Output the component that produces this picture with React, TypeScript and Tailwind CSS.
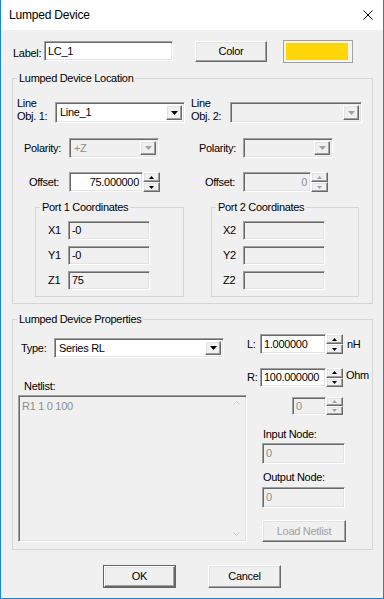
import React from 'react';

const font = "font-['Liberation_Sans',Arial,sans-serif]";

const sunken =
  'border border-t-[#a0a0a0] border-l-[#a0a0a0] border-r-white border-b-white shadow-[inset_1px_1px_0_#696969,inset_-1px_-1px_0_#e3e3e3]';
const raised =
  'border border-t-white border-l-white border-r-[#696969] border-b-[#696969] shadow-[inset_-1px_-1px_0_#a0a0a0,inset_1px_1px_0_#e3e3e3]';

const Arrow: React.FC<{ up?: boolean; size?: 'sm' | 'md'; disabled?: boolean }> = ({ up, size = 'md', disabled }) => {
  const w = size === 'md' ? 7 : 5;
  const h = size === 'md' ? 4 : 3;
  const pts = up ? `0,${h} ${w},${h} ${w / 2},0` : `0,0 ${w},0 ${w / 2},${h}`;
  return (
    <svg width={w} height={h} viewBox={`0 0 ${w} ${h}`}>
      <polygon points={pts} fill={disabled ? '#a0a0a0' : '#000'} />
    </svg>
  );
};

const Combo: React.FC<{ value?: string; w: string; h?: string; disabled?: boolean }> = ({ value, w, h = 'h-[21px]', disabled }) => (
  <div className={`${w} ${h} ${sunken} ${disabled ? 'bg-[#f0f0f0] text-[#8d8d8d]' : 'bg-white'} flex items-stretch p-[2px]`}>
    <div className="flex-1 flex items-center pl-[2px] leading-none">{value}</div>
    <div className={`w-[16px] ${raised} bg-[#f0f0f0] flex items-center justify-center`}>
      <Arrow disabled={disabled} />
    </div>
  </div>
);

const Spin: React.FC<{ value: string; w: string; h?: string; disabled?: boolean; align?: 'left' | 'right' }> = ({ value, w, h = 'h-[20px]', disabled, align = 'right' }) => (
  <div className={`${w} ${h} flex`}>
    <div
      className={`flex-1 ${sunken} ${disabled ? 'bg-[#f0f0f0] text-[#8d8d8d]' : 'bg-white'} flex items-center px-[3px] ${
        align === 'right' ? 'justify-end' : 'justify-start'
      }`}
    >
      {value}
    </div>
    <div className="w-[17px] flex flex-col">
      <div className={`flex-1 ${raised} bg-[#f0f0f0] flex items-center justify-center`}>
        <Arrow up size="sm" disabled={disabled} />
      </div>
      <div className={`flex-1 ${raised} bg-[#f0f0f0] flex items-center justify-center`}>
        <Arrow size="sm" disabled={disabled} />
      </div>
    </div>
  </div>
);

// read-only fields keep black text, disabled ones go grey
const Field: React.FC<{ value?: string; w: string; h?: string; disabled?: boolean; readOnly?: boolean }> = ({ value, w, h = 'h-[19px]', disabled, readOnly }) => (
  <div
    className={`${w} ${h} ${sunken} ${disabled || readOnly ? 'bg-[#f0f0f0]' : 'bg-white'} ${
      disabled ? 'text-[#8d8d8d]' : ''
    } flex items-center px-[3px]`}
  >
    {value}
  </div>
);

const Button: React.FC<{ label: string; w: string; h: string; disabled?: boolean; isDefault?: boolean }> = ({ label, w, h, disabled, isDefault }) => (
  <div className={`${w} ${h} ${isDefault ? 'border border-[#646464]' : ''} flex`}>
    <div className={`flex-1 ${raised} bg-[#f0f0f0] flex items-center justify-center ${disabled ? 'text-[#a0a0a0]' : ''}`}>
      {label}
    </div>
  </div>
);

const Group: React.FC<{ title: string; className?: string; children: React.ReactNode }> = ({ title, className = '', children }) => (
  <fieldset className={`border border-[#d5d5d5] ${className}`}>
    <legend className="ml-[4px] px-[2px] leading-[13px]">{title}</legend>
    {children}
  </fieldset>
);

const PortGroup: React.FC<{ n: number; values: string[]; pl: string; className: string }> = ({ n, values, pl, className }) => (
  <Group title={`Port ${n} Coordinates`} className={`${className} pb-[6px]`}>
    <div className={`flex flex-col gap-[6px] mt-[7px] ${pl}`}>
      {['X', 'Y', 'Z'].map((a, i) => (
        <div key={a} className="flex items-center">
          <span className="w-[20px]">
            {a}
            {n}
          </span>
          <Field value={values[i]} w="w-[82px]" readOnly />
        </div>
      ))}
    </div>
  </Group>
);

const App: React.FC = () => {
  return (
    <div className={`${font} text-[11px] tracking-[-0.3px] text-black w-[384px] h-[599px] border border-t-0 border-[#1883d7] flex flex-col bg-[#f0f0f0]`}>
      {/* Title bar */}
      <div className="h-[30px] bg-white flex items-center justify-between pl-[8px] pr-[10px] shrink-0">
        <span className="text-[12px] tracking-[-0.2px]">Lumped Device</span>
        <svg width="10" height="10" viewBox="0 0 10 10">
          <path d="M0.5 0.5 L9.5 9.5 M9.5 0.5 L0.5 9.5" stroke="#000" strokeWidth="1" />
        </svg>
      </div>

      {/* Label row */}
      <div className="flex items-start mt-[10px] pl-[12px] h-[23px]">
        <span className="w-[31px] mt-[5px]">Label:</span>
        <div className={`mt-[1px] w-[129px] h-[20px] ${sunken} bg-white flex items-center px-[3px]`}>LC_1</div>
        <div className="ml-[22px] mt-[1px]">
          <Button label="Color" w="w-[72px]" h="h-[21px]" />
        </div>
        <div className="ml-[16px] w-[70px] h-[23px] border border-[#a0a0a0] bg-[#f4f4f4] p-[2px] pr-[4px]">
          <div className="w-full h-full bg-[#ffd60a]" />
        </div>
      </div>

      {/* Location group */}
      <Group title="Lumped Device Location" className="ml-[11px] mt-[9px] w-[361px] pb-[6px]">
        <div className="flex items-end mt-[12px]">
          <div className="w-[172px] flex items-end pl-[4px]">
            <div className="w-[38px] leading-[13px]">
              Line
              <br />
              Obj. 1:
            </div>
            <Combo value="Line_1" w="w-[130px]" />
          </div>
          <div className="flex items-end pl-[6px]">
            <div className="w-[39px] leading-[13px]">
              Line
              <br />
              Obj. 2:
            </div>
            <Combo w="w-[132px]" disabled />
          </div>
        </div>

        <div className="flex items-center mt-[15px]">
          <div className="w-[172px] flex items-center pl-[11px]">
            <span className="w-[45px]">Polarity:</span>
            <Combo value="+Z" w="w-[90px]" h="h-[20px]" disabled />
          </div>
          <div className="flex items-center pl-[14px]">
            <span className="w-[44px]">Polarity:</span>
            <Combo w="w-[90px]" h="h-[20px]" disabled />
          </div>
        </div>

        <div className="flex items-center mt-[14px]">
          <div className="w-[172px] flex items-center pl-[16px]">
            <span className="w-[40px]">Offset:</span>
            <Spin value="75.000000" w="w-[91px]" />
          </div>
          <div className="flex items-center pl-[20px]">
            <span className="w-[38px]">Offset:</span>
            <Spin value="0" w="w-[85px]" disabled />
          </div>
        </div>

        <div className="flex items-start mt-[9px]">
          <PortGroup n={1} values={['-0', '-0', '75']} pl="pl-[12px]" className="ml-[22px] w-[149px]" />
          <PortGroup n={2} values={['', '', '']} pl="pl-[11px]" className="ml-[27px] w-[148px]" />
        </div>
      </Group>

      {/* Properties group */}
      <Group title="Lumped Device Properties" className="ml-[11px] mt-[9px] w-[361px] pb-[7px]">
        <div className="flex items-start">
          <div className="w-[234px] flex flex-col">
            <div className="flex items-center mt-[12px] pl-[8px]">
              <span className="w-[33px]">Type:</span>
              <Combo value="Series RL" w="w-[170px]" h="h-[20px]" />
            </div>
            <div className="mt-[22px] pl-[11px] leading-[13px]">Netlist:</div>
            <div className={`mt-[2px] ml-[5px] w-[229px] h-[147px] ${sunken} bg-[#f0f0f0] flex`}>
              <div className="flex-1 text-[#8d8d8d] pl-[3px] pt-[2px]">R1 1 0 100</div>
              <div className="w-[17px] flex flex-col justify-between items-center py-[5px] mr-[1px]">
                <svg width="7" height="4" viewBox="0 0 7 4">
                  <path d="M0.5 3.5 L3.5 0.5 L6.5 3.5" stroke="#c8c8c8" fill="none" />
                </svg>
                <svg width="7" height="4" viewBox="0 0 7 4">
                  <path d="M0.5 0.5 L3.5 3.5 L6.5 0.5" stroke="#c8c8c8" fill="none" />
                </svg>
              </div>
            </div>
          </div>

          <div className="flex flex-col">
            <div className="flex items-center mt-[8px]">
              <span className="w-[13px]">L:</span>
              <Spin value="1.000000" w="w-[83px]" align="left" />
              <span className="ml-[4px]">nH</span>
            </div>
            <div className="flex items-center mt-[14px]">
              <span className="w-[13px]">R:</span>
              <Spin value="100.000000" w="w-[83px]" h="h-[19px]" align="left" />
              <span className="ml-[3px] -mt-[4px]">Ohm</span>
            </div>
            <div className="mt-[10px] ml-[45px]">
              <Spin value="0" w="w-[51px]" h="h-[18px]" align="left" disabled />
            </div>
            <div className="mt-[13px] ml-[16px] leading-[13px]">Input Node:</div>
            <div className="mt-[2px] ml-[15px]">
              <Field value="0" w="w-[83px]" h="h-[21px]" disabled />
            </div>
            <div className="mt-[7px] ml-[16px] leading-[13px]">Output Node:</div>
            <div className="mt-[3px] ml-[15px]">
              <Field value="0" w="w-[83px]" h="h-[21px]" disabled />
            </div>
            <div className="mt-[12px] ml-[15px]">
              <Button label="Load Netlist" w="w-[84px]" h="h-[22px]" disabled />
            </div>
          </div>
        </div>
      </Group>

      {/* Dialog buttons */}
      <div className="flex mt-[15px] ml-[102px] gap-[32px]">
        <Button label="OK" w="w-[73px]" h="h-[23px]" isDefault />
        <Button label="Cancel" w="w-[73px]" h="h-[23px]" />
      </div>
    </div>
  );
};

export default App;
